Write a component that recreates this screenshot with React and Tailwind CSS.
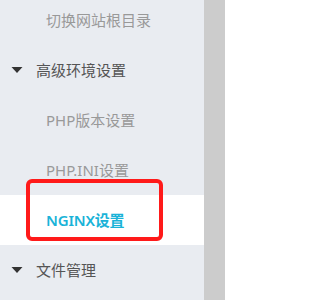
import { useState } from 'react';

const items = [
  { type: 'sub', label: '切换网站根目录' },
  { type: 'group', label: '高级环境设置' },
  { type: 'sub', label: 'PHP版本设置' },
  { type: 'sub', label: 'PHP.INI设置' },
  { type: 'sub', label: 'NGINX设置' },
  { type: 'group', label: '文件管理' },
];

function Caret() {
  return (
    <svg width="12" height="8" viewBox="0 0 12 8" className="mr-[13px] shrink-0" aria-hidden="true">
      <path d="M0.5 1 L11.5 1 L6 7 Z" fill="#333" />
    </svg>
  );
}

export default function App() {
  const [active] = useState('NGINX设置');

  return (
    <div
      className="flex h-[300px] w-[244px] overflow-hidden bg-white text-[15px]"
      style={{ fontFamily: '"Noto Sans", "Noto Sans CJK SC", sans-serif' }}
    >
      <nav className="w-[204px] shrink-0 bg-[#e9ecf1]">
        <ul className="-mt-[5px]">
          {items.map((item) => {
            const isActive = item.label === active;
            if (item.type === 'group') {
              return (
                <li key={item.label} className="flex h-[50px] items-center pl-[11px] text-[#555]">
                  <Caret />
                  {item.label}
                </li>
              );
            }
            return (
              <li
                key={item.label}
                className={`relative flex h-[50px] items-center pl-[46px] ${
                  isActive ? 'bg-white font-semibold tracking-[-0.2px] text-[#1ab3d8]' : 'text-[#999]'
                }`}
              >
                {item.label}
                {isActive && (
                  <span className="pointer-events-none absolute left-[26px] top-[-16px] h-[62px] w-[137px] rounded-[6px] border-4 border-[#ff1a1a]" />
                )}
              </li>
            );
          })}
        </ul>
      </nav>
      <div className="w-[21px] shrink-0 bg-[#cccccc]" />
      <div className="flex-1 bg-white" />
    </div>
  );
}
